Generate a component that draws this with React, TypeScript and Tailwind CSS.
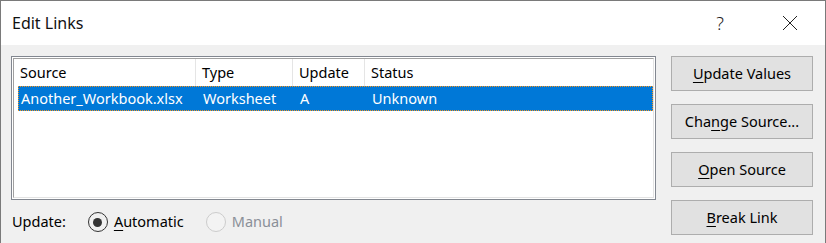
import React from "react";

const font = { fontFamily: '"Noto Sans", "Open Sans", sans-serif' };

function Btn({ k, rest, pre = "" }: { k: string; rest: string; pre?: string }) {
  return (
    <button className="w-[142px] h-[35px] bg-[#e1e1e1] border border-[#adadad] text-[14.5px] text-black flex items-center justify-center">
      {pre}
      <span className="underline underline-offset-[3px]">{k}</span>
      {rest}
    </button>
  );
}

export default function App() {
  return (
    <div
      className="w-[826px] h-[243px] bg-[#f0f0f0] border-l border-r border-t border-[#7a7a7a] flex flex-col overflow-hidden text-black"
      style={font}
    >
      {/* Title bar */}
      <div className="h-[44px] bg-white flex items-center pl-[11px] shrink-0">
        <span className="text-[16px] text-[#111]">Edit Links</span>
        <span className="ml-auto text-[18px] font-light text-[#222] mr-[58px]">?</span>
        <svg width="16" height="16" viewBox="0 0 16 16" className="mr-[27px]">
          <path d="M1 1 L15 15 M15 1 L1 15" stroke="#222" strokeWidth="1" fill="none" />
        </svg>
      </div>

      <div className="flex pl-[10px] pt-[11px] gap-[15px]">
        {/* Left */}
        <div className="flex flex-col">
          <div className="w-[645px] h-[144px] border border-[#828790] p-px bg-white">
            <div className="h-full border border-t-[#a0a0a0] border-l-[#a0a0a0] border-r-[#e3e3e3] border-b-[#e3e3e3] bg-white">
              {/* Header */}
              <div className="grid grid-cols-[182px_97px_72px_1fr] h-[27px] text-[14.5px]">
                <div className="border-r border-[#e5e5e5] pl-[6px] flex items-center">Source</div>
                <div className="border-r border-[#e5e5e5] pl-[6px] flex items-center">Type</div>
                <div className="border-r border-[#e5e5e5] pl-[6px] flex items-center">Update</div>
                <div className="pl-[6px] flex items-center">Status</div>
              </div>
              {/* Selected row */}
              <div className="ml-[4px] h-[25px] bg-[#0078d7] border border-dotted border-[#f7941d] grid grid-cols-[177px_97px_72px_1fr] text-white text-[14.5px]">
                <div className="pl-[2px] flex items-center">Another_Workbook.xlsx</div>
                <div className="pl-[7px] flex items-center">Worksheet</div>
                <div className="pl-[7px] flex items-center">A</div>
                <div className="pl-[7px] flex items-center">Unknown</div>
              </div>
            </div>
          </div>

          {/* Update radios */}
          <div className="flex items-center h-[44px] pl-[1px] text-[14.5px]">
            <span>Update:</span>
            <span className="ml-[22px] w-[20px] h-[20px] rounded-full border-[1.5px] border-[#333] flex items-center justify-center">
              <span className="w-[9px] h-[9px] rounded-full bg-[#333]" />
            </span>
            <span className="ml-[6px]">
              <span className="underline underline-offset-[3px]">A</span>utomatic
            </span>
            <span className="ml-[22px] w-[20px] h-[20px] rounded-full border border-[#cccccc] bg-[#f3f3f3]" />
            <span className="ml-[6px] text-[#8a8f98]">Manual</span>
          </div>
        </div>

        {/* Buttons */}
        <div className="flex flex-col gap-[13px]">
          <Btn k="U" rest="pdate Values" />
          <Btn pre="Cha" k="n" rest="ge Source..." />
          <Btn k="O" rest="pen Source" />
          <Btn k="B" rest="reak Link" />
        </div>
      </div>
    </div>
  );
}
